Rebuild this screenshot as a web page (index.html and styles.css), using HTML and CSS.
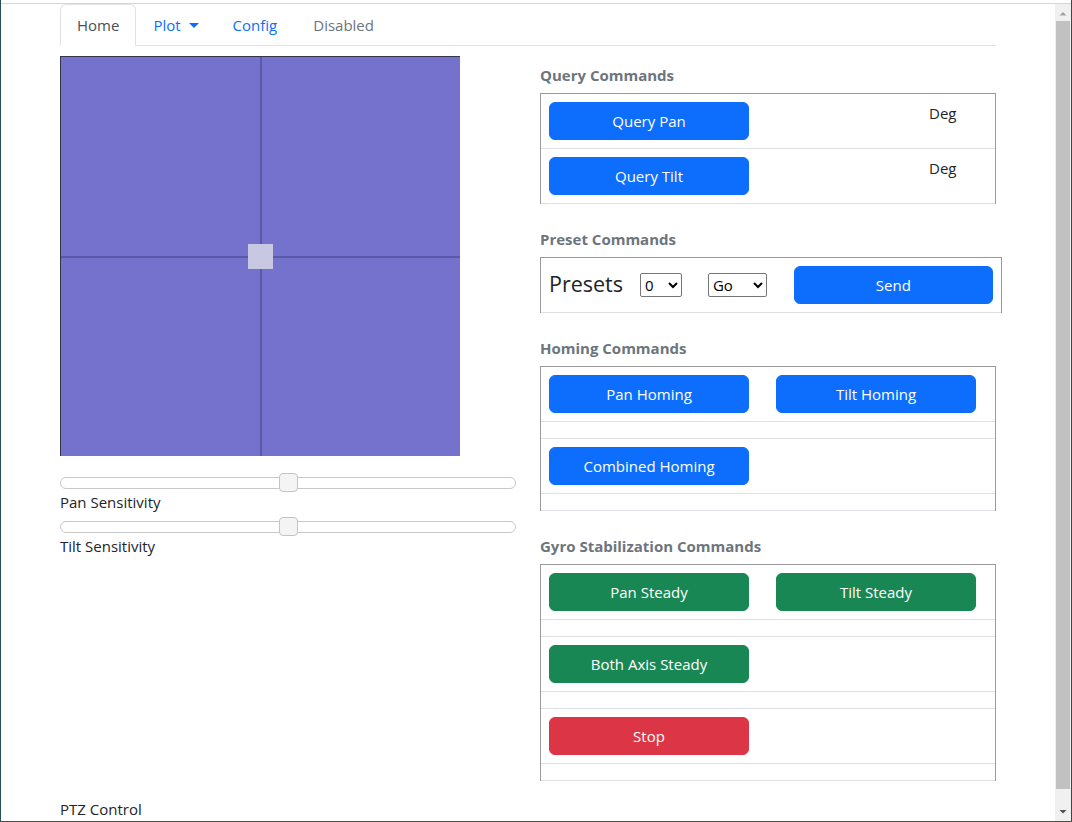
FILE: index.html
```html
<!DOCTYPE html>
<html lang="en">
<head>
  <meta charset="UTF-8">
  <meta name="viewport" content="width=device-width, initial-scale=1.0">
  <title>PTZ Control</title>
  <link rel="stylesheet" href="styles.css">
</head>
<body>
<div class="window">
  <div class="chrome"></div>
  <div class="frame">
    <div class="viewport">
      <div class="container">
        <ul class="nav-tabs">
          <li><a class="nav-link active" href="#">Home</a></li>
          <li><a class="nav-link" href="#">Plot<span class="caret"></span></a></li>
          <li><a class="nav-link" href="#">Config</a></li>
          <li><a class="nav-link disabled" href="#">Disabled</a></li>
        </ul>

        <div class="row">
          <div class="col">
            <svg class="pad" width="400" height="400" viewBox="0 0 400 400">
              <rect x="0" y="0" width="400" height="400" fill="#7472cc"/>
              <rect x="0" y="0" width="1" height="400" fill="#35354a"/>
              <rect x="0" y="0" width="400" height="1" fill="#35354a"/>
              <rect x="200" y="1" width="2" height="399" fill="#5b58a8"/>
              <rect x="1" y="200" width="399" height="2" fill="#5b58a8"/>
              <rect x="188" y="188" width="25" height="25" fill="#c8c8e3"/>
            </svg>

            <input type="range" class="slider first" min="0" max="100" value="50">
            <label class="slider-label">Pan Sensitivity</label>
            <input type="range" class="slider" min="0" max="100" value="50">
            <label class="slider-label">Tilt Sensitivity</label>
          </div>

          <div class="col">
            <h6 class="cmd-title">Query Commands</h6>
            <div class="cmd-table">
              <div class="cmd-row">
                <button class="btn btn-primary">Query Pan</button>
                <span class="unit">Deg</span>
              </div>
              <div class="cmd-row">
                <button class="btn btn-primary">Query Tilt</button>
                <span class="unit">Deg</span>
              </div>
            </div>

            <h6 class="cmd-title">Preset Commands</h6>
            <div class="cmd-table wide">
              <div class="cmd-row presets">
                <span class="preset-label">Presets</span>
                <select class="sel-num">
                  <option>0</option>
                  <option>1</option>
                  <option>2</option>
                </select>
                <select class="sel-go">
                  <option>Go</option>
                  <option>Set</option>
                </select>
                <button class="btn btn-primary send">Send</button>
              </div>
            </div>

            <h6 class="cmd-title">Homing Commands</h6>
            <div class="cmd-table">
              <div class="cmd-row">
                <button class="btn btn-primary">Pan Homing</button>
                <button class="btn btn-primary">Tilt Homing</button>
              </div>
              <div class="cmd-row empty"></div>
              <div class="cmd-row">
                <button class="btn btn-primary">Combined Homing</button>
              </div>
              <div class="cmd-row empty"></div>
            </div>

            <h6 class="cmd-title">Gyro Stabilization Commands</h6>
            <div class="cmd-table">
              <div class="cmd-row">
                <button class="btn btn-success">Pan Steady</button>
                <button class="btn btn-success">Tilt Steady</button>
              </div>
              <div class="cmd-row empty"></div>
              <div class="cmd-row">
                <button class="btn btn-success">Both Axis Steady</button>
              </div>
              <div class="cmd-row empty"></div>
              <div class="cmd-row">
                <button class="btn btn-danger">Stop</button>
              </div>
              <div class="cmd-row empty"></div>
            </div>
          </div>
        </div>

        <p class="footer">PTZ Control</p>
      </div>
    </div>

    <div class="scrollbar">
      <div class="sb-arrow">
        <svg width="16" height="17" viewBox="0 0 16 17"><path d="M4.5 11.5 L11.5 11.5 L8 8 Z" fill="#a3a3a3"/></svg>
      </div>
      <div class="sb-track">
        <div class="sb-thumb"></div>
      </div>
      <div class="sb-arrow">
        <svg width="16" height="17" viewBox="0 0 16 17"><path d="M4.5 6 L11.5 6 L8 9.5 Z" fill="#505050"/></svg>
      </div>
    </div>
  </div>
</div>
</body>
</html>
```

FILE: styles.css
```css
:root {
  --primary: #0d6efd;
  --success: #198754;
  --danger: #dc3545;
  --text: #212529;
  --muted: #6c757d;
  --border: #dee2e6;
  --table-edge: #9a9a9a;
  --radius: 6px;
}

* {
  box-sizing: border-box;
}

body {
  margin: 0;
  font-family: 'Open Sans', 'Noto Sans', sans-serif;
  font-size: 15px;
  line-height: 24px;
  color: var(--text);
  background: #fff;
}

/* browser frame around the page */
.window {
  width: 1072px;
  height: 822px;
  border-left: 1px solid #24505a;
  border-right: 1px solid #24505a;
  border-bottom: 1px solid #4f4f45;
  display: flex;
  flex-direction: column;
  overflow: hidden;
}

.chrome {
  flex: none;
  height: 4px;
  border-bottom: 1px solid #d6d6d6;
}

.frame {
  flex: 1;
  display: flex;
  min-height: 0;
}

.viewport {
  flex: 1;
  overflow: hidden;
}

.container {
  width: 960px;
  padding: 0 12px;
  margin: 0 auto;
}

/* tabs */
.nav-tabs {
  list-style: none;
  margin: 0;
  padding: 0;
  display: flex;
  border-bottom: 1px solid var(--border);
}

.nav-link {
  display: block;
  padding: 8px 16px;
  margin-bottom: -1px;
  border: 1px solid transparent;
  border-top-left-radius: var(--radius);
  border-top-right-radius: var(--radius);
  color: var(--primary);
  text-decoration: none;
}

.nav-link.active {
  color: #495057;
  background: #fff;
  border-color: var(--border) var(--border) #fff;
}

.nav-link.disabled {
  color: var(--muted);
  padding-left: 18px;
}

.caret {
  display: inline-block;
  margin-left: 8px;
  vertical-align: 3px;
  border-top: 5px solid;
  border-left: 5px solid transparent;
  border-right: 5px solid transparent;
}

.row {
  display: flex;
  gap: 24px;
  margin-top: 10px;
}

.col {
  flex: 1;
  min-width: 0;
}

/* joystick pad */
.pad {
  display: block;
}

.slider {
  -webkit-appearance: none;
  appearance: none;
  display: block;
  width: 100%;
  height: 12px;
  margin: 7px 0 0;
  background: transparent;
}

.slider.first {
  margin-top: 21px;
}

.slider::-webkit-slider-runnable-track {
  height: 12px;
  background: #fff;
  border: 1px solid #c8c8c8;
  border-radius: 6px;
}

.slider::-webkit-slider-thumb {
  -webkit-appearance: none;
  width: 19px;
  height: 19px;
  margin-top: -5px;
  background: #f4f4f4;
  border: 1px solid #c4c4c4;
  border-radius: 4px;
}

.slider-label {
  display: block;
  margin-top: 1px;
}

/* command tables */
.cmd-title {
  margin: 0 0 8px;
  padding-top: 10px;
  font-size: 15px;
  font-weight: 700;
  line-height: 19px;
  color: var(--muted);
}

.cmd-table {
  border: 1px solid var(--table-edge);
  border-bottom: 0;
  margin-bottom: 16px;
}

.cmd-table.wide {
  width: 462px;
}

.cmd-row {
  display: flex;
  align-items: flex-start;
  padding: 8px;
  border-bottom: 1px solid var(--border);
}

.cmd-row.empty {
  height: 17px;
}

.btn {
  width: 200px;
  height: 38px;
  padding: 6px 12px;
  border: 1px solid transparent;
  border-radius: var(--radius);
  font-family: inherit;
  font-size: 15px;
  line-height: 24px;
  color: #fff;
  cursor: pointer;
}

.btn + .btn {
  margin-left: 27px;
}

.btn-primary {
  background: var(--primary);
  border-color: var(--primary);
}

.btn-success {
  background: var(--success);
  border-color: var(--success);
}

.btn-danger {
  background: var(--danger);
  border-color: var(--danger);
}

.unit {
  margin-left: 180px;
  margin-top: -1px;
}

.presets {
  align-items: center;
}

.preset-label {
  font-size: 21.5px;
  line-height: 28px;
  margin-top: -3px;
}

select {
  height: 24px;
  font-family: inherit;
  font-size: 15px;
  color: #000;
  background: #fff;
  border: 1px solid #767676;
  border-radius: 2px;
}

.sel-num {
  width: 42px;
  margin-left: 17px;
}

.sel-go {
  width: 59px;
  margin-left: 26px;
}

.btn.send {
  margin-left: 27px;
}

.footer {
  margin: 0;
}

/* fake scrollbar */
.scrollbar {
  flex: none;
  width: 16px;
  background: #f0f0f0;
  display: flex;
  flex-direction: column;
}

.sb-arrow {
  flex: none;
  height: 17px;
}

.sb-arrow svg {
  display: block;
}

.sb-track {
  flex: 1;
}

.sb-thumb {
  height: 768px;
  margin: 0 1px;
  background: #c1c1c1;
}
```
